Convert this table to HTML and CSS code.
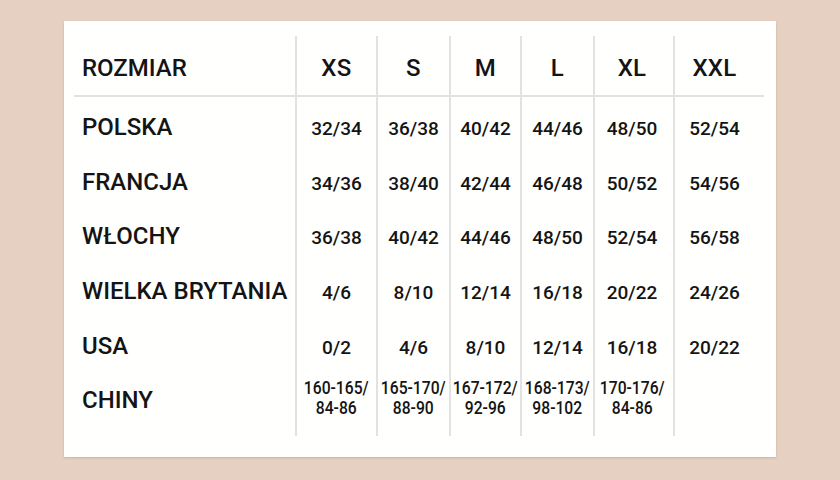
FILE: index.html
```html
<!DOCTYPE html>
<html lang="pl">
<head>
<meta charset="utf-8">
<title>Tabela rozmiarów</title>
<link rel="stylesheet" href="styles.css">
</head>
<body>
<div class="card">
  <div class="table">
    <div class="col col-label">
      <div class="head">ROZMIAR</div>
      <div class="body">
        <div class="cell label">POLSKA</div>
        <div class="cell label">FRANCJA</div>
        <div class="cell label">WŁOCHY</div>
        <div class="cell label">WIELKA BRYTANIA</div>
        <div class="cell label">USA</div>
        <div class="cell label">CHINY</div>
      </div>
    </div>
    <div class="col col-xs">
      <div class="head">XS</div>
      <div class="body">
        <div class="cell num">32/34</div>
        <div class="cell num">34/36</div>
        <div class="cell num">36/38</div>
        <div class="cell num">4/6</div>
        <div class="cell num">0/2</div>
        <div class="cell num two"><span>160-165/<br>84-86</span></div>
      </div>
    </div>
    <div class="col col-s">
      <div class="head">S</div>
      <div class="body">
        <div class="cell num">36/38</div>
        <div class="cell num">38/40</div>
        <div class="cell num">40/42</div>
        <div class="cell num">8/10</div>
        <div class="cell num">4/6</div>
        <div class="cell num two"><span>165-170/<br>88-90</span></div>
      </div>
    </div>
    <div class="col col-m">
      <div class="head">M</div>
      <div class="body">
        <div class="cell num">40/42</div>
        <div class="cell num">42/44</div>
        <div class="cell num">44/46</div>
        <div class="cell num">12/14</div>
        <div class="cell num">8/10</div>
        <div class="cell num two"><span>167-172/<br>92-96</span></div>
      </div>
    </div>
    <div class="col col-l">
      <div class="head">L</div>
      <div class="body">
        <div class="cell num">44/46</div>
        <div class="cell num">46/48</div>
        <div class="cell num">48/50</div>
        <div class="cell num">16/18</div>
        <div class="cell num">12/14</div>
        <div class="cell num two"><span>168-173/<br>98-102</span></div>
      </div>
    </div>
    <div class="col col-xl">
      <div class="head">XL</div>
      <div class="body">
        <div class="cell num">48/50</div>
        <div class="cell num">50/52</div>
        <div class="cell num">52/54</div>
        <div class="cell num">20/22</div>
        <div class="cell num">16/18</div>
        <div class="cell num two"><span>170-176/<br>84-86</span></div>
      </div>
    </div>
    <div class="col col-xxl">
      <div class="head">XXL</div>
      <div class="body">
        <div class="cell num">52/54</div>
        <div class="cell num">54/56</div>
        <div class="cell num">56/58</div>
        <div class="cell num">24/26</div>
        <div class="cell num">20/22</div>
        <div class="cell num two"></div>
      </div>
    </div>
  </div>
</div>
</body>
</html>
```

FILE: styles.css
```css
html, body {
  margin: 0;
  padding: 0;
}
body {
  width: 840px;
  height: 480px;
  background: #e6d0c1;
  font-family: Roboto, "Liberation Sans", sans-serif;
  color: #141414;
  overflow: hidden;
}
.card {
  margin: 21px 0 0 64px;
  width: 712px;
  height: 436px;
  background: #fffffe;
  box-shadow: 0 1px 2px rgba(120, 90, 70, 0.25);
  box-sizing: border-box;
  padding: 15px 0 0 10px;
}
.table {
  display: flex;
  align-items: flex-start;
}
.col {
  display: flex;
  flex-direction: column;
  box-sizing: border-box;
}
.col + .col {
  border-left: 2px solid #e2e2e2;
}
.col-label { width: 221px; }
.col-xs { width: 81px; }
.col-s { width: 73px; }
.col-m { width: 71px; }
.col-l { width: 73px; }
.col-xl { width: 80px; }
.col-xxl { width: 91px; }
.col-xl .head, .col-xl .body { padding-right: 4px; }
.col-xxl .head, .col-xxl .body { padding-right: 10px; }

.head {
  height: 61px;
  box-sizing: border-box;
  padding-top: 4px;
  border-bottom: 2px solid #e2e2e2;
  display: flex;
  align-items: center;
  justify-content: center;
  font-size: 24px;
  font-weight: 500;
  letter-spacing: 0.3px;
}
.col-label .head {
  justify-content: flex-start;
  padding-left: 8px;
  letter-spacing: 0;
}
.body {
  padding: 3px 0 10px;
}
.cell {
  height: 54.6px;
  display: flex;
  align-items: center;
  justify-content: center;
  box-sizing: border-box;
}
.label {
  justify-content: flex-start;
  padding-left: 8px;
  font-size: 24px;
  font-weight: 500;
  white-space: nowrap;
}
.num {
  font-size: 19px;
  font-weight: 500;
  padding-top: 3px;
}
.num.two {
  padding-top: 0;
  font-size: 18px;
  line-height: 20.5px;
  text-align: center;
  margin-top: -2px;
}
.num.two span {
  display: inline-block;
  white-space: nowrap;
  transform: scaleX(0.87);
}
```
